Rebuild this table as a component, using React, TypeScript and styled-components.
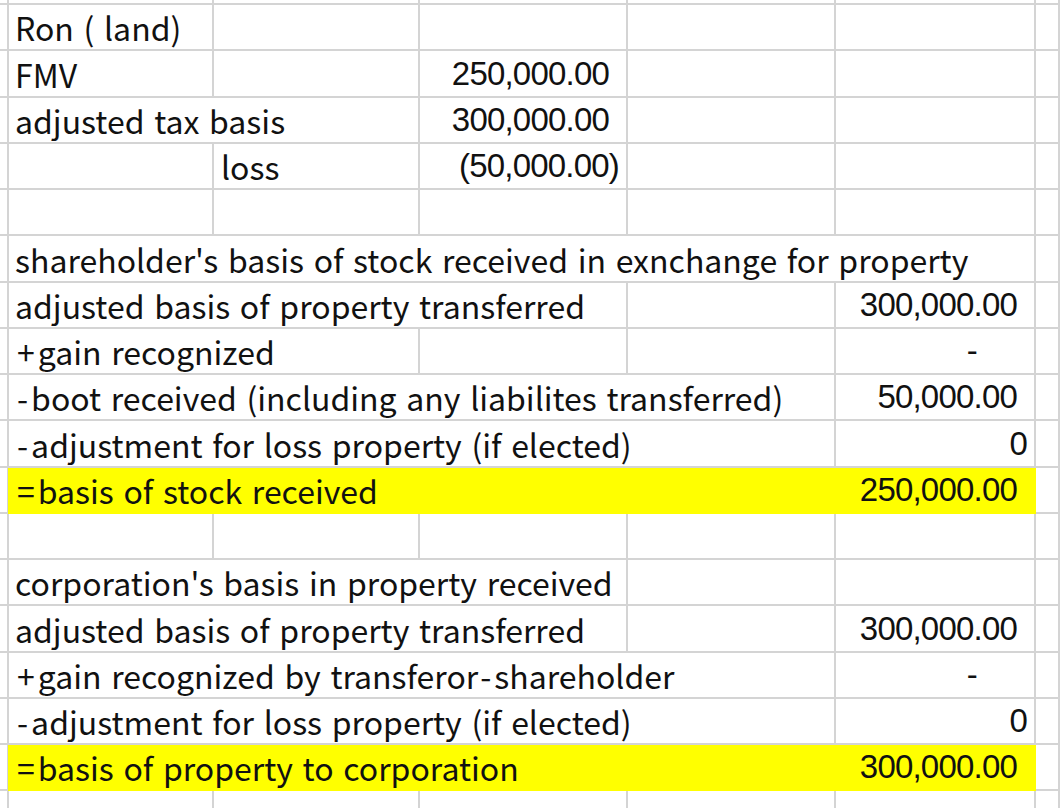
import styled, { createGlobalStyle } from "styled-components"

type Cell = Readonly<{
  text?: string
  span?: number
  kind?: "text" | "num" | "paren" | "zero" | "dash"
}>

type SheetRow = Readonly<{
  cells: Cell[]
  highlight?: boolean
}>

const GRID = "#d4d4d4"
const FILL = "#ffff00"

const GlobalStyle = createGlobalStyle`
  html, body {
    margin: 0;
    padding: 0;
    background: #ffffff;
    overflow: hidden;
  }
`

const Sheet = styled.div`
  width: 1060px;
  height: 808px;
  overflow: hidden;
  display: flex;
  flex-direction: column;
  background: #ffffff;
  color: #111111;
`

const Row = styled.div<{ $height: number }>`
  display: grid;
  grid-template-columns: 8px 206px 206px 208px 208px 200px 1fr;
  height: ${(p) => p.$height}px;
  flex: none;
`

const padRight = {
  text: 0,
  num: 17,
  paren: 7,
  zero: 7,
  dash: 57,
}

const Box = styled.div<{
  $span: number
  $fill: boolean
  $kind: Cell["kind"]
}>`
  grid-column: span ${(p) => p.$span};
  box-sizing: border-box;
  border-right: 2px solid ${(p) => (p.$fill ? FILL : GRID)};
  border-bottom: 2px solid ${(p) => (p.$fill ? FILL : GRID)};
  background: ${(p) => (p.$fill ? FILL : "transparent")};
  display: flex;
  align-items: flex-end;
  justify-content: ${(p) => (p.$kind === "text" ? "flex-start" : "flex-end")};
  padding: 0 ${(p) => padRight[p.$kind ?? "text"]}px 0 7px;
  white-space: nowrap;
  overflow: hidden;
  min-width: 0;
`

const Label = styled.span`
  font-family: "Noto Sans CJK SC", "Noto Sans", sans-serif;
  font-size: 32px;
  line-height: 44px;
  word-spacing: 2.5px;
`

// +, - and = are set wider in the sheet's font
const Sign = styled.span`
  padding: 0 3px 0 2px;
`

const Amount = styled.span`
  font-family: "Liberation Sans", Arial, sans-serif;
  font-size: 33px;
  line-height: 44px;
  letter-spacing: -0.8px;
`

const t = (text: string, span = 1): Cell => ({ text, span, kind: "text" })
const n = (text: string, kind: Cell["kind"] = "num"): Cell => ({ text, kind })
const e = (span = 1): Cell => ({ span, kind: "text" })

const rows: SheetRow[] = [
  { cells: [t("Ron ( land)"), e(), e(), e(), e()] },
  { cells: [t("FMV"), e(), n("250,000.00"), e(), e()] },
  { cells: [t("adjusted tax basis", 2), n("300,000.00"), e(), e()] },
  { cells: [e(), t("loss"), n("(50,000.00)", "paren"), e(), e()] },
  { cells: [e(), e(), e(), e(), e()] },
  {
    cells: [
      t("shareholder's basis of stock received in exnchange for property", 5),
    ],
  },
  {
    cells: [
      t("adjusted basis of property transferred", 3),
      e(),
      n("300,000.00"),
    ],
  },
  { cells: [t("+gain recognized", 2), e(), e(), n("-", "dash")] },
  {
    cells: [
      t("-boot received (including any liabilites transferred)", 4),
      n("50,000.00"),
    ],
  },
  {
    cells: [
      t("-adjustment for loss property (if elected)", 4),
      n("0", "zero"),
    ],
  },
  {
    highlight: true,
    cells: [t("=basis of stock received", 4), n("250,000.00")],
  },
  { cells: [e(), e(), e(), e(), e()] },
  { cells: [t("corporation's basis in property received", 3), e(), e()] },
  {
    cells: [
      t("adjusted basis of property transferred", 3),
      e(),
      n("300,000.00"),
    ],
  },
  {
    cells: [
      t("+gain recognized by transferor-shareholder", 4),
      n("-", "dash"),
    ],
  },
  {
    cells: [
      t("-adjustment for loss property (if elected)", 4),
      n("0", "zero"),
    ],
  },
  {
    highlight: true,
    cells: [t("=basis of property to corporation", 4), n("300,000.00")],
  },
  { cells: [e(), e(), e(), e(), e()] },
]

const renderLabel = (text: string) =>
  text
    .split(/([-+=])/)
    .map((part, i) =>
      i % 2 === 1 ? <Sign key={i}>{part}</Sign> : part,
    )

const SheetRowView = ({ row, height }: { row: SheetRow; height: number }) => (
  <Row $height={height}>
    <Box $span={1} $fill={false} $kind="text" />
    {row.cells.map((cell, i) => (
      <Box
        key={i}
        $span={cell.span ?? 1}
        $fill={!!row.highlight}
        $kind={cell.kind}
      >
        {cell.text &&
          (cell.kind === "text" ? (
            <Label>{renderLabel(cell.text)}</Label>
          ) : (
            <Amount>{cell.text}</Amount>
          ))}
      </Box>
    ))}
    <Box $span={1} $fill={false} $kind="text" />
  </Row>
)

const App = () => (
  <>
    <GlobalStyle />
    <Sheet>
      <SheetRowView row={{ cells: [e(), e(), e(), e(), e()] }} height={5} />
      {rows.map((row, i) => (
        <SheetRowView key={i} row={row} height={i % 4 === 1 ? 47 : 46} />
      ))}
    </Sheet>
  </>
)

export default App
